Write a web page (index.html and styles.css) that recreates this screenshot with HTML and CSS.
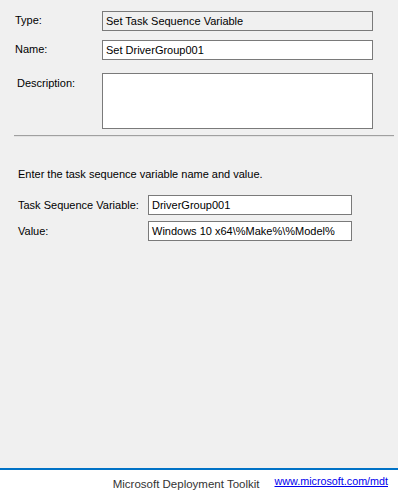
FILE: index.html
```html
<!DOCTYPE html>
<html lang="en">
<head>
  <meta charset="UTF-8">
  <title>Set Task Sequence Variable</title>
  <link rel="stylesheet" href="styles.css">
</head>
<body>

  <div class="page">
    <!-- Propriedades do passo -->
    <div class="props">
      <div class="linha">
        <span class="rotulo">Type:</span>
        <div class="caixa somente">Set Task Sequence Variable</div>
      </div>
      <div class="linha">
        <span class="rotulo">Name:</span>
        <div class="caixa">Set DriverGroup001</div>
      </div>
      <div class="linha desc">
        <span class="rotulo">Description:</span>
        <div class="caixa area"></div>
      </div>
    </div>

    <div class="separador"></div>

    <!-- Variavel -->
    <div class="variavel">
      <p class="instrucao">Enter the task sequence variable name and value.</p>
      <div class="linha2">
        <span class="rotulo">Task Sequence Variable:</span>
        <div class="caixa">DriverGroup001</div>
      </div>
      <div class="linha2">
        <span class="rotulo">Value:</span>
        <div class="caixa">Windows 10 x64\%Make%\%Model%</div>
      </div>
    </div>
  </div>

  <div class="rodape">
    <span class="marca">Microsoft Deployment Toolkit</span>
    <a class="link" href="#">www.microsoft.com/mdt</a>
  </div>

</body>
</html>
```

FILE: styles.css
```css
* {
  box-sizing: border-box;
  font-family: 'Liberation Sans', Arial, sans-serif;
}

body {
  margin: 0;
  padding: 0;
  background: #f0f0f0;
  height: 100vh;
  display: flex;
  flex-direction: column;
  font-size: 11px;
  line-height: 13px;
  color: #000;
}

.page {
  flex: 1;
}

.props {
  padding: 11px 0 0 15px;
}

.linha {
  display: flex;
  align-items: center;
  margin-bottom: 9px;
}

.linha.desc {
  align-items: flex-start;
  margin-top: 13px;
}

.rotulo {
  width: 87px;
  flex: none;
  white-space: nowrap;
}

.linha .rotulo {
  margin-top: -2px;
}

.linha.desc .rotulo {
  margin-top: 4px;
  padding-left: 2px;
}

.caixa {
  width: 271px;
  height: 20px;
  border: 1px solid #7a7a7a;
  background: #fff;
  padding: 3px 0 0 3px;
  white-space: nowrap;
  overflow: hidden;
}

.caixa.somente {
  background: #f0f0f0;
}

.caixa.area {
  height: 56px;
}

.separador {
  margin: -3px 4px 0 14px;
  height: 2px;
  border-top: 1px solid #a0a0a0;
  border-bottom: 1px solid #e3e3e3;
}

.variavel {
  padding: 0 0 0 18px;
}

.instrucao {
  margin: 31px 0 14px 0;
}

.linha2 {
  display: flex;
  align-items: center;
  margin-bottom: 6px;
}

.linha2 .rotulo {
  width: 130px;
}

.linha2 .caixa {
  width: 204px;
}

.rodape {
  flex: none;
  height: 24px;
  background: #fff;
  border-top: 2px solid #0072c6;
  display: flex;
  align-items: center;
  justify-content: flex-end;
  padding-right: 10px;
}

.marca {
  color: #333;
  font-size: 11.5px;
  margin-top: 6px;
  margin-right: 15px;
}

.link {
  color: #0000ee;
  font-size: 10.75px;
  text-decoration: underline;
  margin-top: 0;
}
```
